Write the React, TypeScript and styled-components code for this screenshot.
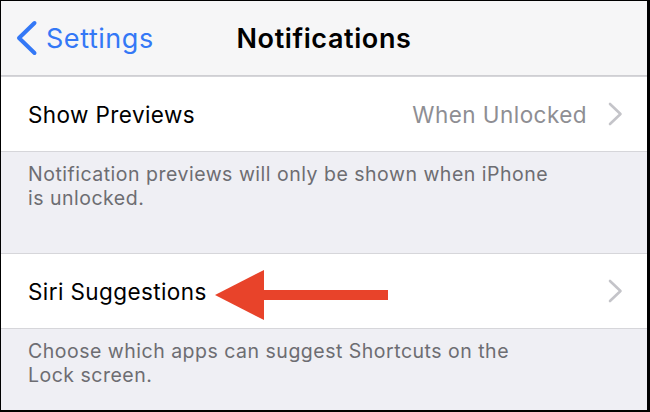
import React from "react";
import styled, { createGlobalStyle } from "styled-components";

const GlobalStyle = createGlobalStyle`
  html, body {
    margin: 0;
    padding: 0;
    background: #ffffff;
  }
  * {
    box-sizing: border-box;
  }
`;

interface SettingRowProps {
  label: string;
  value?: string;
  children?: React.ReactNode;
}

const Chevron = () => (
  <svg width="15" height="24" viewBox="0 0 15 24">
    <path
      d="M2 2 L12.5 12 L2 22"
      fill="none"
      stroke="#c4c4c9"
      strokeWidth="2.6"
      strokeLinecap="round"
      strokeLinejoin="round"
    />
  </svg>
);

const SettingRow = ({ label, value, children }: SettingRowProps) => (
  <StRow>
    <StLabel>{label}</StLabel>
    <StRight>
      {value && <StValue>{value}</StValue>}
      <Chevron />
    </StRight>
    {children}
  </StRow>
);

const App = () => {
  return (
    <>
      <GlobalStyle />
      <StFrame>
        <StNavBar>
          <StBack>
            <svg width="24" height="36" viewBox="0 0 24 36">
              <path
                d="M19.5 3 L4 18 L19.5 33"
                fill="none"
                stroke="#3478f6"
                strokeWidth="4"
                strokeLinecap="round"
                strokeLinejoin="round"
              />
            </svg>
            <span>Settings</span>
          </StBack>
          <StTitle>Notifications</StTitle>
          <div />
        </StNavBar>

        <SettingRow label="Show Previews" value="When Unlocked" />
        <StFooter $height={101}>
          Notification previews will only be shown when iPhone
          <br />
          is unlocked.
        </StFooter>

        <SettingRow label="Siri Suggestions">
          <StArrow width="173" height="52" viewBox="0 0 173 52">
            <polygon points="0,26 49,1 49,51" fill="#e8432a" />
            <rect x="48" y="21" width="125" height="10" fill="#e8432a" />
          </StArrow>
        </SettingRow>
        <StFooter $height={82}>
          Choose which apps can suggest Shortcuts on the
          <br />
          Lock screen.
        </StFooter>
      </StFrame>
    </>
  );
};

export default App;

const StFrame = styled.div`
  display: flex;
  flex-direction: column;
  width: 650px;
  height: 412px;
  overflow: hidden;
  background: #efeff4;
  border-style: solid;
  border-color: #000000;
  border-width: 1px 3px 2px 1px;
  font-family: Inter, "Liberation Sans", sans-serif;
`;

const StNavBar = styled.div`
  display: grid;
  grid-template-columns: 1fr auto 1fr;
  align-items: center;
  flex: 0 0 75px;
  background: #f6f6f7;
  border-bottom: 1px solid #cfcfd3;
`;

const StBack = styled.div`
  display: flex;
  align-items: center;
  gap: 7px;
  padding-left: 14px;
  color: #3478f6;
  font-size: 27px;
  letter-spacing: 0.55px;
`;

const StTitle = styled.h1`
  margin: 0;
  color: #000000;
  font-size: 27px;
  font-weight: 600;
  letter-spacing: 0.6px;
`;

const StRow = styled.div`
  position: relative;
  display: flex;
  align-items: center;
  justify-content: space-between;
  flex: 0 0 76px;
  padding: 0 24px 0 27px;
  background: #ffffff;
  border-top: 1px solid #d6d6da;
  border-bottom: 1px solid #d6d6da;
`;

const StLabel = styled.span`
  color: #000000;
  font-size: 22.5px;
  letter-spacing: 0.4px;
`;

const StRight = styled.div`
  display: flex;
  align-items: center;
  gap: 21px;
`;

const StValue = styled.span`
  color: #8e8e93;
  font-size: 22.5px;
  letter-spacing: 0.45px;
`;

const StFooter = styled.div<{ $height: number }>`
  flex: 0 0 ${({ $height }) => $height}px;
  padding: 10px 27px 0;
  color: #6d6d72;
  font-size: 19.5px;
  line-height: 24px;
  letter-spacing: 0.5px;
`;

const StArrow = styled.svg`
  position: absolute;
  left: 214px;
  top: 15px;
`;
